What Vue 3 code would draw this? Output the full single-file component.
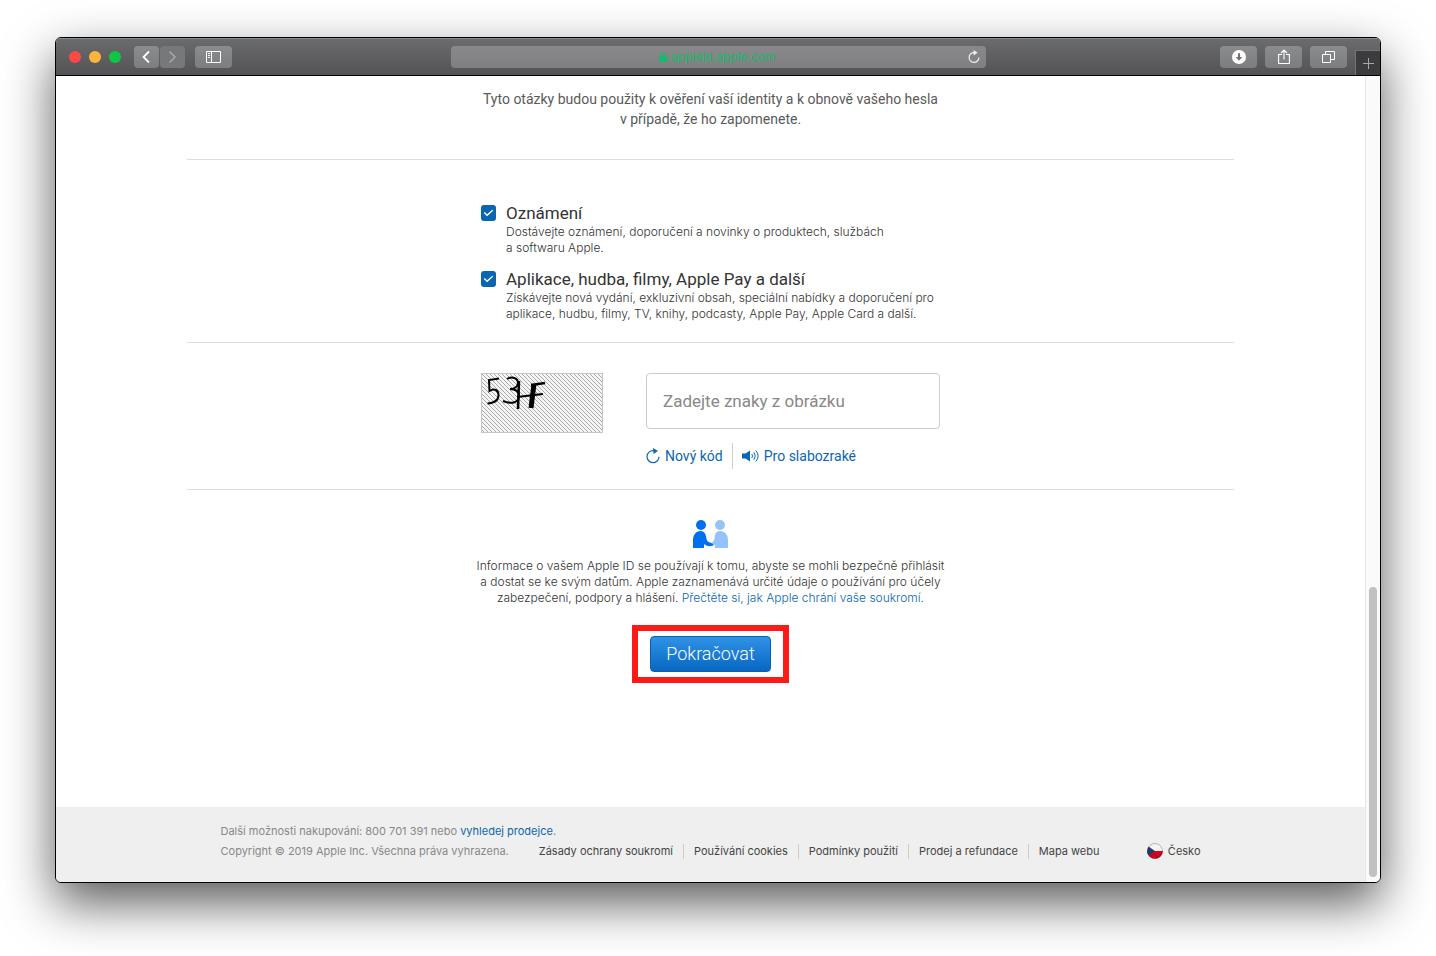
<template>
  <div class="desktop">
    <div class="window">
      <header class="toolbar">
        <div class="toolbar-side">
          <div class="lights">
            <button class="light red" type="button" aria-label="Zavřít"></button>
            <button class="light yellow" type="button" aria-label="Minimalizovat"></button>
            <button class="light green" type="button" aria-label="Celá obrazovka"></button>
          </div>
          <div class="nav">
            <button class="tool back" type="button" aria-label="Zpět">
              <svg width="11" height="14" viewBox="0 0 11 14"><path d="M8 1.500 2.500 7 8 12.500" fill="none" stroke="#fff" stroke-width="1.800" /></svg>
            </button>
            <button class="tool forward" type="button" aria-label="Vpřed">
              <svg width="11" height="14" viewBox="0 0 11 14"><path d="M2.500 1.500 8 7 2.500 12.500" fill="none" stroke="#a9a9ab" stroke-width="1.500" /></svg>
            </button>
          </div>
          <button class="tool" type="button" aria-label="Boční panel">
            <svg width="15" height="12" viewBox="0 0 15 12" fill="none" stroke="#fff">
              <path d="M.5.5h14v11H.5zM5.500.5v11" />
              <path d="M2 2.500h2M2 4.500h2M2 6.500h2" />
            </svg>
          </button>
        </div>
        <div class="address">
          <span class="host">
            <svg width="8" height="10" viewBox="0 0 8 10"><path d="M2 5V2.800a2 2 0 0 1 4 0V5" fill="none" stroke="#0fbd6a" stroke-width="1.200" /><rect y="4.500" width="8" height="5.500" rx=".6" fill="#0fbd6a" /></svg>
            appleid.apple.com
          </span>
          <button class="reload" type="button" aria-label="Obnovit">
            <svg width="12" height="14" viewBox="0 0 12 14"><path d="M6.400 2.600A4.900 4.900 0 1 0 10.900 7.500" fill="none" stroke="#f0f0f0" stroke-width="1.200" /><path d="M5.600 0 9.600 2.800 5.600 5.600z" fill="#f0f0f0" /></svg>
          </button>
        </div>
        <div class="toolbar-side right">
          <button class="tool" type="button" aria-label="Stahování">
            <svg width="14" height="14" viewBox="0 0 14 14"><circle cx="7" cy="7" r="7" fill="#fff" /><path d="M6 3.200h2v3.900h2.200L7 10.800 3.800 7.100H6z" fill="#707173" /></svg>
          </button>
          <button class="tool" type="button" aria-label="Sdílet">
            <svg width="12" height="16" viewBox="0 0 12 16" fill="none" stroke="#fff" stroke-width="1.100"><path d="M4 5.500H.6v9h10.800v-9H8M6 10.500V1.200M3 4 6 1l3 3" /></svg>
          </button>
          <button class="tool" type="button" aria-label="Panely">
            <svg width="13" height="12" viewBox="0 0 13 12" fill="none" stroke="#fff"><path d="M.5 3.500h8v8h-8zM3.500 3.500v-3h9v8h-4" /></svg>
          </button>
        </div>
        <button class="new-tab" type="button" aria-label="Nový panel">
          <svg width="11" height="11" viewBox="0 0 11 11"><path d="M5.500 0v11M0 5.500h11" stroke="#a8a8a8" /></svg>
        </button>
      </header>

      <div class="viewport">
        <div class="page">
          <main>
            <section class="intro">
              <p>Tyto otázky budou použity k&nbsp;ověření vaší identity a&nbsp;k&nbsp;obnově vašeho hesla<br />v&nbsp;případě, že ho zapomenete.</p>
            </section>

            <section class="subscriptions">
              <div class="column">
                <div v-for="item in options" :key="item.id" class="option">
                  <input :id="item.id" v-model="item.checked" type="checkbox" />
                  <div>
                    <label :for="item.id">{{ item.title }}</label>
                    <p><span v-for="line in item.lines" :key="line">{{ line }}</span></p>
                  </div>
                </div>
              </div>
            </section>

            <section class="captcha">
              <div class="column captcha-row">
                <svg class="captcha-image" width="122" height="60" viewBox="0 0 122 60" role="img" aria-label="Kontrolní obrázek">
                  <defs>
                    <pattern id="hatch" width="4" height="4" patternUnits="userSpaceOnUse">
                      <path d="M-1-1 5 5M3-1 5 1M-1 3 1 5" stroke="#a0a0a0" stroke-width=".9" />
                    </pattern>
                  </defs>
                  <rect width="122" height="60" fill="#f5f5f5" />
                  <rect width="122" height="60" fill="url(#hatch)" />
                  <rect x=".5" y=".5" width="121" height="59" fill="none" stroke="#c6c6c6" />
                  <g fill="none" stroke="#000">
                    <path d="M18 5.500 8 7l.5 11c5-3 9-1 9 4 0 5-4 8-11 8.500" stroke-width="2" />
                    <path d="M26 6c5-3 11-1 11 4 0 4-4 6-8 6 5 0 9 2 9 7 0 6-7 9-16 5" stroke-width="2" />
                    <path d="M38 8l-1 28" stroke-width="2.500" />
                    <path d="M36 24l26-3" stroke-width="2" />
                    <path d="M53 11l-3 24" stroke-width="5" />
                    <path d="M50 12l14-2" stroke-width="2.500" />
                  </g>
                </svg>
                <div class="captcha-form">
                  <input v-model="code" type="text" aria-label="Zadejte znaky z obrázku" placeholder="Zadejte znaky z obrázku" />
                  <div class="captcha-links">
                    <button type="button">
                      <svg width="14" height="16" viewBox="0 0 14 16"><path d="M7.500 2.700A6 6 0 1 0 13 8.700" fill="none" stroke="#0a66b2" stroke-width="1.200" /><path d="M7 0 12 3 7.500 6z" fill="#0a66b2" /></svg>
                      Nový kód
                    </button>
                    <button type="button">
                      <svg width="17" height="14" viewBox="0 0 17 14"><path d="M0 4.500h3.500L8 1.500v11L3.500 9.500H0z" fill="#0a66b2" /><path d="M9.800 5q1.400 2 0 4M11.800 3.200q3 3.800 0 7.600M13.800 1.500q4.600 5.500 0 11" fill="none" stroke="#0a66b2" /></svg>
                      Pro slabozraké
                    </button>
                  </div>
                </div>
              </div>
            </section>

            <section class="privacy">
              <svg width="35" height="30" viewBox="0 0 35 30">
                <g fill="#96c2fb">
                  <circle cx="27" cy="6" r="5" />
                  <path d="M35 29H22v-3.500c-2 1.500-4 1.800-6 1.500-1.500-.3-1.500-1.800 0-2.300 3-.7 5-2 5.500-4.700.3-5 1.500-8 5.500-8 5 0 8 4 8 9z" />
                </g>
                <g fill="#0070f0">
                  <circle cx="8" cy="6" r="5" />
                  <path d="M0 29v-8c0-5 3-9 7.500-9 4 0 5.500 3 6 8 .4 2 1.500 3 3.500 3.500 1.500.4 3 1.500 3.500 2.500-1.500 1.500-6 2-9.500-1V29z" />
                </g>
              </svg>
              <p>
                Informace o&nbsp;vašem Apple&nbsp;ID se používají k&nbsp;tomu, abyste se mohli bezpečně přihlásit<br />
                a&nbsp;dostat se ke svým datům. Apple zaznamenává určité údaje o&nbsp;používání pro účely<br />
                zabezpečení, podpory a&nbsp;hlášení. <a href="#">Přečtěte si, jak Apple chrání vaše soukromí.</a>
              </p>
              <div class="highlight">
                <button class="submit" type="button">Pokračovat</button>
              </div>
            </section>
          </main>

          <footer>
            <div class="footer-inner">
              <p>Další možnosti nakupování: 800&nbsp;701&nbsp;391 nebo <a href="#">vyhledej prodejce</a>.</p>
              <div class="footer-row">
                <span>Copyright © 2019 Apple Inc. Všechna práva vyhrazena.</span>
                <nav>
                  <a v-for="link in footerLinks" :key="link" href="#">{{ link }}</a>
                </nav>
                <a class="country" href="#">
                  <svg width="16" height="16" viewBox="0 0 16 16">
                    <clipPath id="flag"><circle cx="8" cy="8" r="7.800" /></clipPath>
                    <g clip-path="url(#flag)">
                      <path d="M0 0h16v8H0z" fill="#f4f4f4" />
                      <path d="M0 8h16v8H0z" fill="#c9061f" />
                      <path d="M0 2.500 8 8 0 13.500z" fill="#1f3d70" />
                    </g>
                    <circle cx="8" cy="8" r="7.500" fill="none" stroke="#000" stroke-opacity=".25" />
                  </svg>
                  Česko
                </a>
              </div>
            </div>
          </footer>
        </div>
        <div class="scrollbar"><div class="thumb"></div></div>
      </div>
    </div>
  </div>
</template>

<script setup>
import { ref } from 'vue'

const code = ref('')

const options = ref([
  {
    id: 'news',
    title: 'Oznámení',
    checked: true,
    lines: ['Dostávejte oznámení, doporučení a novinky o produktech, službách', 'a softwaru Apple.']
  },
  {
    id: 'apps',
    title: 'Aplikace, hudba, filmy, Apple Pay a další',
    checked: true,
    lines: [
      'Získávejte nová vydání, exkluzivní obsah, speciální nabídky a doporučení pro',
      'aplikace, hudbu, filmy, TV, knihy, podcasty, Apple Pay, Apple Card a další.'
    ]
  }
])

const footerLinks = ['Zásady ochrany soukromí', 'Používání cookies', 'Podmínky použití', 'Prodej a refundace', 'Mapa webu']
</script>

<style>
body {
  margin: 0;
  background: #fff;
}
</style>

<style scoped>
* {
  box-sizing: border-box;
}

.desktop {
  display: flex;
  min-height: 100vh;
  padding: 37px 55px 73px;
  overflow: hidden;
  font-family: Inter, 'Noto Sans', sans-serif;
  color: #5a5a5a;
}

.window {
  display: flex;
  flex: 1;
  flex-direction: column;
  min-width: 0;
  border: 1px solid #000;
  border-radius: 6px;
  background: #fff;
  box-shadow: 0 20px 50px rgba(0, 0, 0, 0.65);
  overflow: hidden;
}

button {
  padding: 0;
  border: 0;
  background: none;
  font: inherit;
  color: inherit;
}

a {
  color: #0a66b2;
  text-decoration: none;
}

p {
  margin: 0;
}

.toolbar {
  position: relative;
  display: grid;
  grid-template-columns: 1fr 535px 1fr;
  align-items: center;
  height: 38px;
  border-bottom: 1px solid #000;
  background: linear-gradient(#6b6c6e, #535355);
  box-shadow: inset 0 1px #8a8a8c;
}

.toolbar-side {
  display: flex;
  align-items: center;
  padding-left: 13px;
}

.toolbar-side.right {
  justify-content: flex-end;
  gap: 8px;
  padding: 0 33px 0 0;
}

.lights {
  display: flex;
  gap: 8px;
  margin-right: 13px;
}

.light {
  width: 12px;
  height: 12px;
  border-radius: 50%;
}

.red {
  background: #fc4a48;
}

.yellow {
  background: #fdb43c;
}

.green {
  background: #12c544;
}

.nav {
  display: flex;
  gap: 1px;
  margin-right: 10px;
}

.tool {
  display: flex;
  align-items: center;
  justify-content: center;
  width: 37px;
  height: 22px;
  border-radius: 4px;
  background: linear-gradient(#8b8c8e, #7c7d7f);
}

.back,
.forward {
  width: 25px;
}

.forward {
  background: #77787a;
}

.address {
  display: flex;
  align-items: center;
  justify-content: center;
  height: 22px;
  padding: 0 6px;
  border-radius: 4px;
  background: linear-gradient(#89898b, #7f7f81);
}

.host {
  display: flex;
  flex: 1;
  align-items: center;
  justify-content: center;
  gap: 4px;
  padding-left: 10px;
  font-size: 12px;
  color: #0fbd6a;
}

.reload,
.reload svg {
  display: block;
}

.new-tab {
  position: absolute;
  right: 0;
  bottom: 0;
  display: flex;
  align-items: center;
  justify-content: center;
  width: 25px;
  height: 25px;
  border: solid #747476;
  border-width: 1px 0 0 1px;
  background: #3c3c3e;
}

.viewport {
  display: flex;
  flex: 1;
}

.page {
  display: flex;
  flex: 1;
  flex-direction: column;
}

main {
  flex: 1;
  width: 80%;
  margin: 0 auto;
}

section {
  border-bottom: 1px solid #dedede;
}

.column {
  width: 459px;
  margin: 0 auto;
}

.intro {
  padding: 13px 0 30px;
  font-size: 14px;
  line-height: 20px;
  text-align: center;
}

.intro,
.option label,
.captcha-form input,
.captcha-links,
.submit {
  font-family: Roboto, 'Noto Sans', sans-serif;
}

.subscriptions {
  padding: 42px 0 20px;
}

.option {
  display: flex;
  gap: 10px;
  white-space: nowrap;
}

.option + .option {
  margin-top: 12px;
}

.option input {
  flex: none;
  width: 15px;
  height: 16px;
  margin: 3px 0 0;
  border-radius: 3px;
  appearance: none;
  border: 1px solid #bbb;
}

.option input:checked {
  border: 0;
  background: #0a66b2 url("data:image/svg+xml,%3Csvg xmlns='http://www.w3.org/2000/svg' viewBox='0 0 16 16'%3E%3Cpath d='M3.500 8l3 3 6-5.500' fill='none' stroke='white' stroke-width='1.500'/%3E%3C/svg%3E");
}

.option label {
  display: block;
  font-size: 17px;
  line-height: 22px;
  color: #333;
}

.option p {
  font-size: 12px;
  line-height: 16px;
}

.option p,
.privacy p {
  font-weight: 300;
  color: #333;
}

.option span {
  display: block;
}

.captcha {
  padding: 30px 0 20px;
}

.captcha-row {
  display: flex;
  align-items: flex-start;
  justify-content: space-between;
}

.captcha-form {
  width: 294px;
}

.captcha-form input {
  display: block;
  width: 100%;
  height: 56px;
  padding: 0 16px;
  border: 1px solid #ccc;
  border-radius: 4px;
  font-size: 17px;
  color: #333;
}

.captcha-form input::placeholder {
  color: #888;
}

.captcha-links {
  display: flex;
  margin-top: 14px;
  font-size: 14px;
  line-height: 26px;
  color: #0a66b2;
}

.captcha-links button {
  display: flex;
  align-items: center;
  gap: 5px;
}

.captcha-links button + button {
  margin-left: 9px;
  padding-left: 9px;
  border-left: 1px solid #ccc;
}

.privacy {
  display: flex;
  flex-direction: column;
  align-items: center;
  padding-top: 29px;
  border: 0;
  text-align: center;
}

.privacy p {
  margin-top: 9px;
  font-size: 12px;
  line-height: 16px;
  white-space: nowrap;
}

.highlight {
  margin-top: 19px;
  padding: 5px 12px;
  border: 6px solid #fc1a16;
}

.submit {
  display: block;
  height: 36px;
  padding: 0 15px 1px;
  border: 1px solid #0a5fb0;
  border-radius: 4px;
  background: linear-gradient(#2f93e6, #0767c2);
  font-size: 18px;
  font-weight: 300;
  color: #fff;
}

footer {
  padding: 14px 0 21px;
  background: #efefef;
  font-size: 11px;
  line-height: 20px;
  color: #888;
  white-space: nowrap;
}

.footer-inner {
  max-width: 980px;
  margin: 0 auto;
}

.footer-row {
  display: flex;
  align-items: center;
}

nav {
  display: flex;
  align-items: center;
  margin-left: 30px;
  line-height: 15px;
}

nav a,
.country {
  color: #444;
}

nav a + a {
  margin-left: 10px;
  padding-left: 10px;
  border-left: 1px solid #ccc;
}

.country {
  display: flex;
  align-items: center;
  gap: 5px;
  margin-left: auto;
}

.scrollbar {
  display: flex;
  align-items: flex-end;
  width: 15px;
  padding: 0 3px 5px;
  border-left: 1px solid #e6e6e6;
  background: #fafafa;
}

.thumb {
  width: 8px;
  height: 36.2%;
  border-radius: 4px;
  background: #c1c1c1;
}
</style>
